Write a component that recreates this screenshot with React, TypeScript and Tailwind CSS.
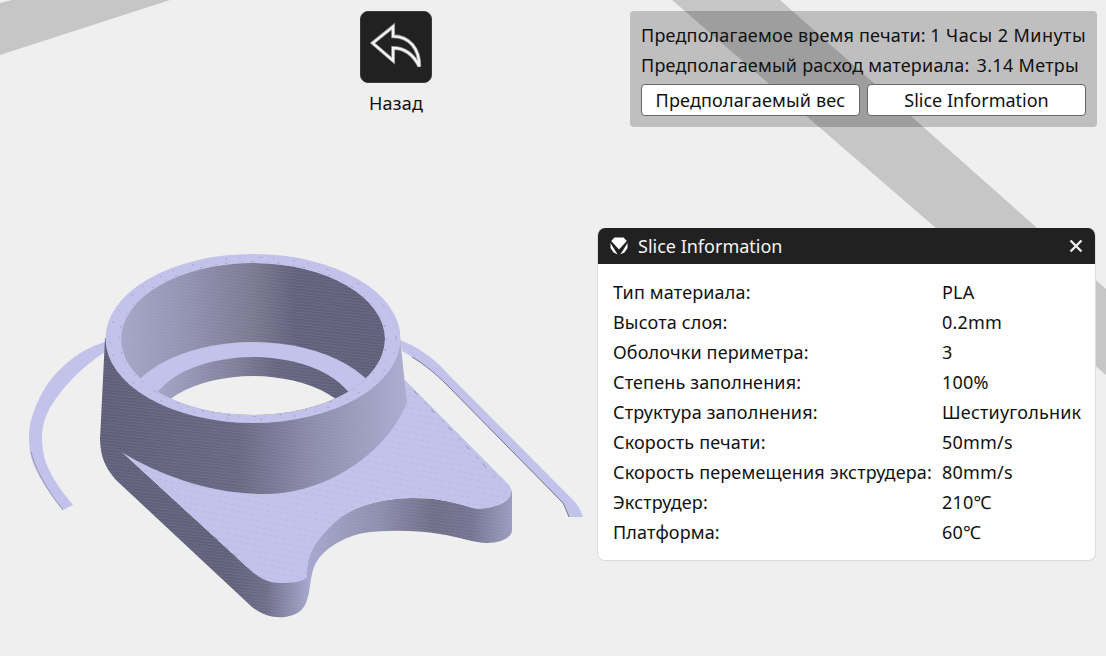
const rows: [string, string][] = [
  ["Тип материала:", "PLA"],
  ["Высота слоя:", "0.2mm"],
  ["Оболочки периметра:", "3"],
  ["Степень заполнения:", "100%"],
  ["Структура заполнения:", "Шестиугольник"],
  ["Скорость печати:", "50mm/s"],
  ["Скорость перемещения экструдера:", "80mm/s"],
  ["Экструдер:", "210℃"],
  ["Платформа:", "60℃"],
];

const LIGHT = "#c2c2ea";
const strips = {
  left: "M105 342C92 346 78 353 67 363C54 374 46 385 40 397C33 411 29 424 29 437C29 446 30 455 33 463C40 480 52 497 63 510L73 505C62 492 52 478 46 463C43 454 42 446 42 437C42 424 47 411 55 400C65 385 84 365 105 352Z",
  right: "M400 340C408 343 416 347 423 352C432 358 440 365 447 373L573 500C578 505 581 511 583 517L569 517C567 512 565 507 563 503L447 385C438 376 430 368 420 362C414 358 408 354 402 351Z",
};
const coneWall = "M105 338L100 440L123 453C160 475 210 494 265 494C325 494 385 455 407 403L400 338Z";
const leftWall = "M100 436C100 458 106 468 116 480L252 607C262 615 272 618 285 617C298 615 306 609 308 596L310 572L280 583L247 567L123 453Z";
const rightWall = "M307 577C306 556 313 542 337 520C355 505 385 498 413 498C435 498 450 501 473 508C485 510 500 506 507 500L512 490V530C512 538 500 543 487 543C475 543 460 537 440 534C415 530 385 530 363 533C340 538 318 552 313 570C310 580 310 590 308 597Z";
const plate = "M123 453L247 567C258 578 268 583 280 583C292 583 303 582 307 577C306 556 313 542 337 520C355 505 385 498 413 498C435 498 450 501 473 508C485 510 500 506 507 500C513 495 513 488 507 483L405 380L300 420Z";

function Model() {
  return (
    <svg className="absolute inset-0" width="1106" height="656" viewBox="0 0 1106 656">
      <defs>
        <linearGradient id="inner" gradientUnits="userSpaceOnUse" x1="121" y1="0" x2="385" y2="0">
          <stop offset="0" stopColor="#a6a6c8" />
          <stop offset="0.28" stopColor="#8f8fad" />
          <stop offset="0.5" stopColor="#78788f" />
          <stop offset="0.66" stopColor="#5f5f78" />
          <stop offset="1" stopColor="#5d5d76" />
        </linearGradient>
        <linearGradient id="hole" gradientUnits="userSpaceOnUse" x1="158" y1="0" x2="348" y2="0">
          <stop offset="0" stopColor="#a4a4c6" />
          <stop offset="0.4" stopColor="#7f7f9a" />
          <stop offset="0.62" stopColor="#64647d" />
          <stop offset="1" stopColor="#5d5d76" />
        </linearGradient>
        <linearGradient id="cone" gradientUnits="userSpaceOnUse" x1="100" y1="0" x2="407" y2="0">
          <stop offset="0" stopColor="#5c5c75" />
          <stop offset="0.45" stopColor="#666680" />
          <stop offset="0.68" stopColor="#8a8aa8" />
          <stop offset="1" stopColor="#adadd2" />
        </linearGradient>
        <linearGradient id="lw" gradientUnits="userSpaceOnUse" x1="230" y1="0" x2="310" y2="0">
          <stop offset="0" stopColor="#5e5e77" />
          <stop offset="0.45" stopColor="#6c6c87" />
          <stop offset="1" stopColor="#a8a8cd" />
        </linearGradient>
        <linearGradient id="rw" gradientUnits="userSpaceOnUse" x1="308" y1="0" x2="512" y2="0">
          <stop offset="0" stopColor="#a8a8ce" />
          <stop offset="0.35" stopColor="#8d8dac" />
          <stop offset="0.62" stopColor="#6c6c86" />
          <stop offset="0.8" stopColor="#737390" />
          <stop offset="1" stopColor="#9c9cc0" />
        </linearGradient>
        <pattern id="dots" width="3" height="3" patternUnits="userSpaceOnUse" patternTransform="rotate(6)">
          <rect x="0" y="0" width="2" height="1" fill="#b4b4d8" opacity="0.22" />
          <rect x="2" y="2" width="1" height="1" fill="#b4b4d8" opacity="0.14" />
        </pattern>
        <pattern id="dash" width="7" height="6" patternUnits="userSpaceOnUse" patternTransform="rotate(10)">
          <rect x="0" y="0" width="4" height="0.7" fill="#9c9cc4" opacity="0.3" />
        </pattern>
        <clipPath id="innerClip">
          <ellipse cx="253" cy="339" rx="132" ry="76" />
        </clipPath>
      </defs>

      <polygon points="0,3 12,0 170,0 0,55" fill="#c6c6c6" />
      <polygon points="672,0 780,0 1106,289 1106,375" fill="#c6c6c6" />

      <path d={strips.left} fill={LIGHT} />
      <path d="M31 452C33 460 36 468 40 475C46 487 54 499 63 510" fill="none" stroke="#8a8aa6" strokeWidth="0.8" />
      <path d={strips.right} fill={LIGHT} />
      <path d="M412 357C424 364 436 374 447 385L563 503C565 507 567 512 569 517" fill="none" stroke="#5a5a72" strokeWidth="0.8" />

      <path d={leftWall} fill="url(#lw)" />
      <path d={leftWall} fill="url(#dots)" />
      <path d={rightWall} fill="url(#rw)" />
      <path d={rightWall} fill="url(#dots)" />
      <path d={plate} fill={LIGHT} />
      <path d={plate} fill="url(#dash)" />
      <path d="M414 391L500 482M140 470L240 560" fill="none" stroke="#7c7ca4" strokeWidth="0.7" strokeDasharray="5 11 2 7" />

      <path d={coneWall} fill="url(#cone)" />
      <path d={coneWall} fill="url(#dots)" />

      <ellipse cx="253" cy="338.5" rx="147.5" ry="84.5" fill={LIGHT} />
      <g clipPath="url(#innerClip)">
        <ellipse cx="253" cy="339" rx="132" ry="76" fill="url(#inner)" />
        <ellipse cx="253" cy="339" rx="132" ry="76" fill="url(#dots)" />
        <ellipse cx="253" cy="418" rx="132" ry="76" fill={LIGHT} />
        <ellipse cx="253" cy="417" rx="105" ry="60" fill="url(#hole)" />
        <ellipse cx="253" cy="417" rx="105" ry="60" fill="url(#dots)" />
        <ellipse cx="253" cy="436" rx="105" ry="60" fill="#efefef" />
      </g>
      <ellipse cx="253" cy="339" rx="133.5" ry="77.5" fill="none" stroke="#6c6c88" strokeWidth="0.6" strokeDasharray="1 9 2 14" opacity="0.7" />
      <ellipse cx="253" cy="338.5" rx="143" ry="81" fill="none" stroke="#6c6c88" strokeWidth="0.6" strokeDasharray="2 12 1 19" opacity="0.7" />
    </svg>
  );
}

export default function App() {
  return (
    <div
      className="relative h-[656px] w-[1106px] overflow-hidden bg-[#efefef] text-[18px] tracking-[0.2px] text-[#111]"
      style={{ fontFamily: '"Noto Sans", "Open Sans", sans-serif' }}
    >
      <Model />

      <div className="absolute left-[360px] top-[11px] flex w-[72px] flex-col items-center">
        <button className="flex h-[72px] w-[72px] items-center justify-center rounded-lg border border-[#3a3a3a] bg-[#212121]">
          <svg width="72" height="72" viewBox="0 0 72 72" fill="none" strokeLinejoin="miter">
            <path d="M12 32L33 15V25C50 25 60 38 60 56C54 44 46 37 33 37V50Z" stroke="#8a8a8a" strokeWidth="4" />
            <path d="M12 32L33 15V25C50 25 60 38 60 56C54 44 46 37 33 37V50Z" stroke="#f4f4f4" strokeWidth="2.4" />
          </svg>
        </button>
        <span className="mt-[7px] whitespace-nowrap leading-[26px]">Назад</span>
      </div>

      <div className="absolute left-[630px] top-[11px] flex h-[116px] w-[467px] flex-col rounded bg-black/20 px-[11px] pt-[9px]">
        <div className="flex h-[30px] items-center justify-between whitespace-nowrap">
          <span>Предполагаемое время печати:</span>
          <span className="tracking-[0.45px]">1 Часы 2 Минуты</span>
        </div>
        <div className="flex h-[30px] items-center gap-[7px] whitespace-nowrap">
          <span>Предполагаемый расход материала:</span>
          <span className="tracking-[0.3px]">3.14 Метры</span>
        </div>
        <div className="mt-[4px] flex gap-[7px] tracking-[0.15px]">
          <button className="h-[32px] w-[219px] rounded border border-[#666] bg-white whitespace-nowrap">Предполагаемый вес</button>
          <button className="h-[32px] w-[219px] rounded border border-[#666] bg-white whitespace-nowrap tracking-normal">Slice Information</button>
        </div>
      </div>

      <div className="absolute left-[597px] top-[228px] w-[499px] overflow-hidden rounded-lg border border-t-0 border-[#dcdcdc] bg-white">
        <div className="-mx-px flex h-[36px] items-center bg-[#212121] pl-[13px] pr-[13px] text-[#f4f4f4]">
          <svg width="18" height="18" viewBox="0 0 18 18" fill="#fff">
            <path d="M4.5 0.5H13.5L16.8 4L9 12.5L1.2 4Z" />
            <path d="M0.5 6L7.6 17.5L3.6 15.6L0.5 11Z" />
            <path d="M17.5 6L10.4 17.5L14.4 15.6L17.5 11Z" />
          </svg>
          <span className="ml-[10px] flex-1 tracking-normal">Slice Information</span>
          <svg width="14" height="14" viewBox="0 0 14 14" stroke="#eee" strokeWidth="2.4" fill="none">
            <path d="M1.5 1.5L12.5 12.5M12.5 1.5L1.5 12.5" />
          </svg>
        </div>
        <div className="grid grid-cols-[329px_1fr] py-[13px] pl-[15px]">
          {rows.map(([k, v]) => (
            <div key={k} className="col-span-2 grid h-[30px] grid-cols-subgrid items-center whitespace-nowrap">
              <span className="tracking-[0.15px]">{k}</span>
              <span>{v}</span>
            </div>
          ))}
        </div>
      </div>
    </div>
  );
}
